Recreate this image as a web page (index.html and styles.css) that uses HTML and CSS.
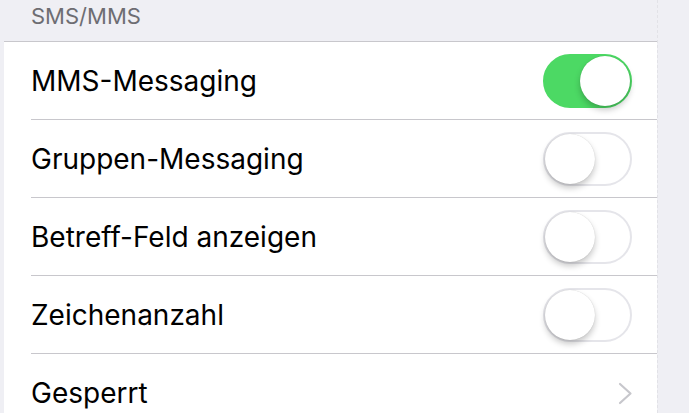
FILE: index.html
```html
<!DOCTYPE html>
<html lang="de">

<head>
    <meta charset="UTF-8">
    <meta name="viewport" content="width=device-width, initial-scale=1.0">
    <title>SMS/MMS</title>
    <link rel="stylesheet" href="styles.css">
</head>

<body>
    <div class="page">
        <section class="panel">
            <h2 class="section-title">SMS/MMS</h2>
            <ul class="list">
                <li class="row">
                    <span class="label">MMS-Messaging</span>
                    <span class="switch on"><span class="knob"></span></span>
                </li>
                <li class="row">
                    <span class="label">Gruppen-Messaging</span>
                    <span class="switch"><span class="knob"></span></span>
                </li>
                <li class="row">
                    <span class="label">Betreff-Feld anzeigen</span>
                    <span class="switch"><span class="knob"></span></span>
                </li>
                <li class="row">
                    <span class="label">Zeichenanzahl</span>
                    <span class="switch"><span class="knob"></span></span>
                </li>
                <li class="row">
                    <span class="label">Gesperrt</span>
                    <svg class="chevron" width="15" height="23" viewBox="0 0 15 23">
                        <path d="M2 2 L12.5 11.5 L2 21" fill="none" stroke="#c7c7cc" stroke-width="2.2" stroke-linecap="round" stroke-linejoin="round" />
                    </svg>
                </li>
            </ul>
        </section>
        <div class="side"></div>
    </div>
</body>

</html>
```

FILE: styles.css
```css
/* Reset and Base Styling */
* {
    margin: 0;
    padding: 0;
    box-sizing: border-box;
}

body {
    font-family: Inter, "Noto Sans", sans-serif;
    background-color: #efeff4;
    color: #000;
    overflow: hidden;
}

.page {
    display: flex;
    height: 413px;
    padding-left: 4px;
}

.panel {
    width: 653px;
    flex-shrink: 0;
}

.section-title {
    height: 41px;
    padding: 3px 0 0 27px;
    font-size: 22px;
    font-weight: 400;
    color: #6d6d72;
    line-height: 26px;
}

.list {
    list-style: none;
    background: #fff;
    border-top: 1px solid #c8c7cc;
}

.row {
    display: flex;
    align-items: center;
    justify-content: space-between;
    height: 78px;
    margin-left: 27px;
    padding-right: 25px;
    border-bottom: 1px solid #c8c7cc;
}

.row:last-child {
    border-bottom: none;
}

.label {
    font-size: 28px;
}

/* Toggle switch */
.switch {
    position: relative;
    width: 89px;
    height: 54px;
    border-radius: 27px;
    border: 2px solid #e5e5ea;
    background: #fff;
}

.switch .knob {
    position: absolute;
    top: 0;
    left: 0;
    width: 50px;
    height: 50px;
    border-radius: 50%;
    background: #fff;
    box-shadow: 0 4px 6px rgba(0, 0, 0, 0.22), 0 0 1px rgba(0, 0, 0, 0.2);
}

.switch.on {
    background: #4cd964;
    border-color: #4cd964;
}

.switch.on .knob {
    left: 35px;
}

.chevron {
    margin-right: -1px;
}

.side {
    flex: 1;
    border-left: 1px dashed #e2e2e7;
}
```
